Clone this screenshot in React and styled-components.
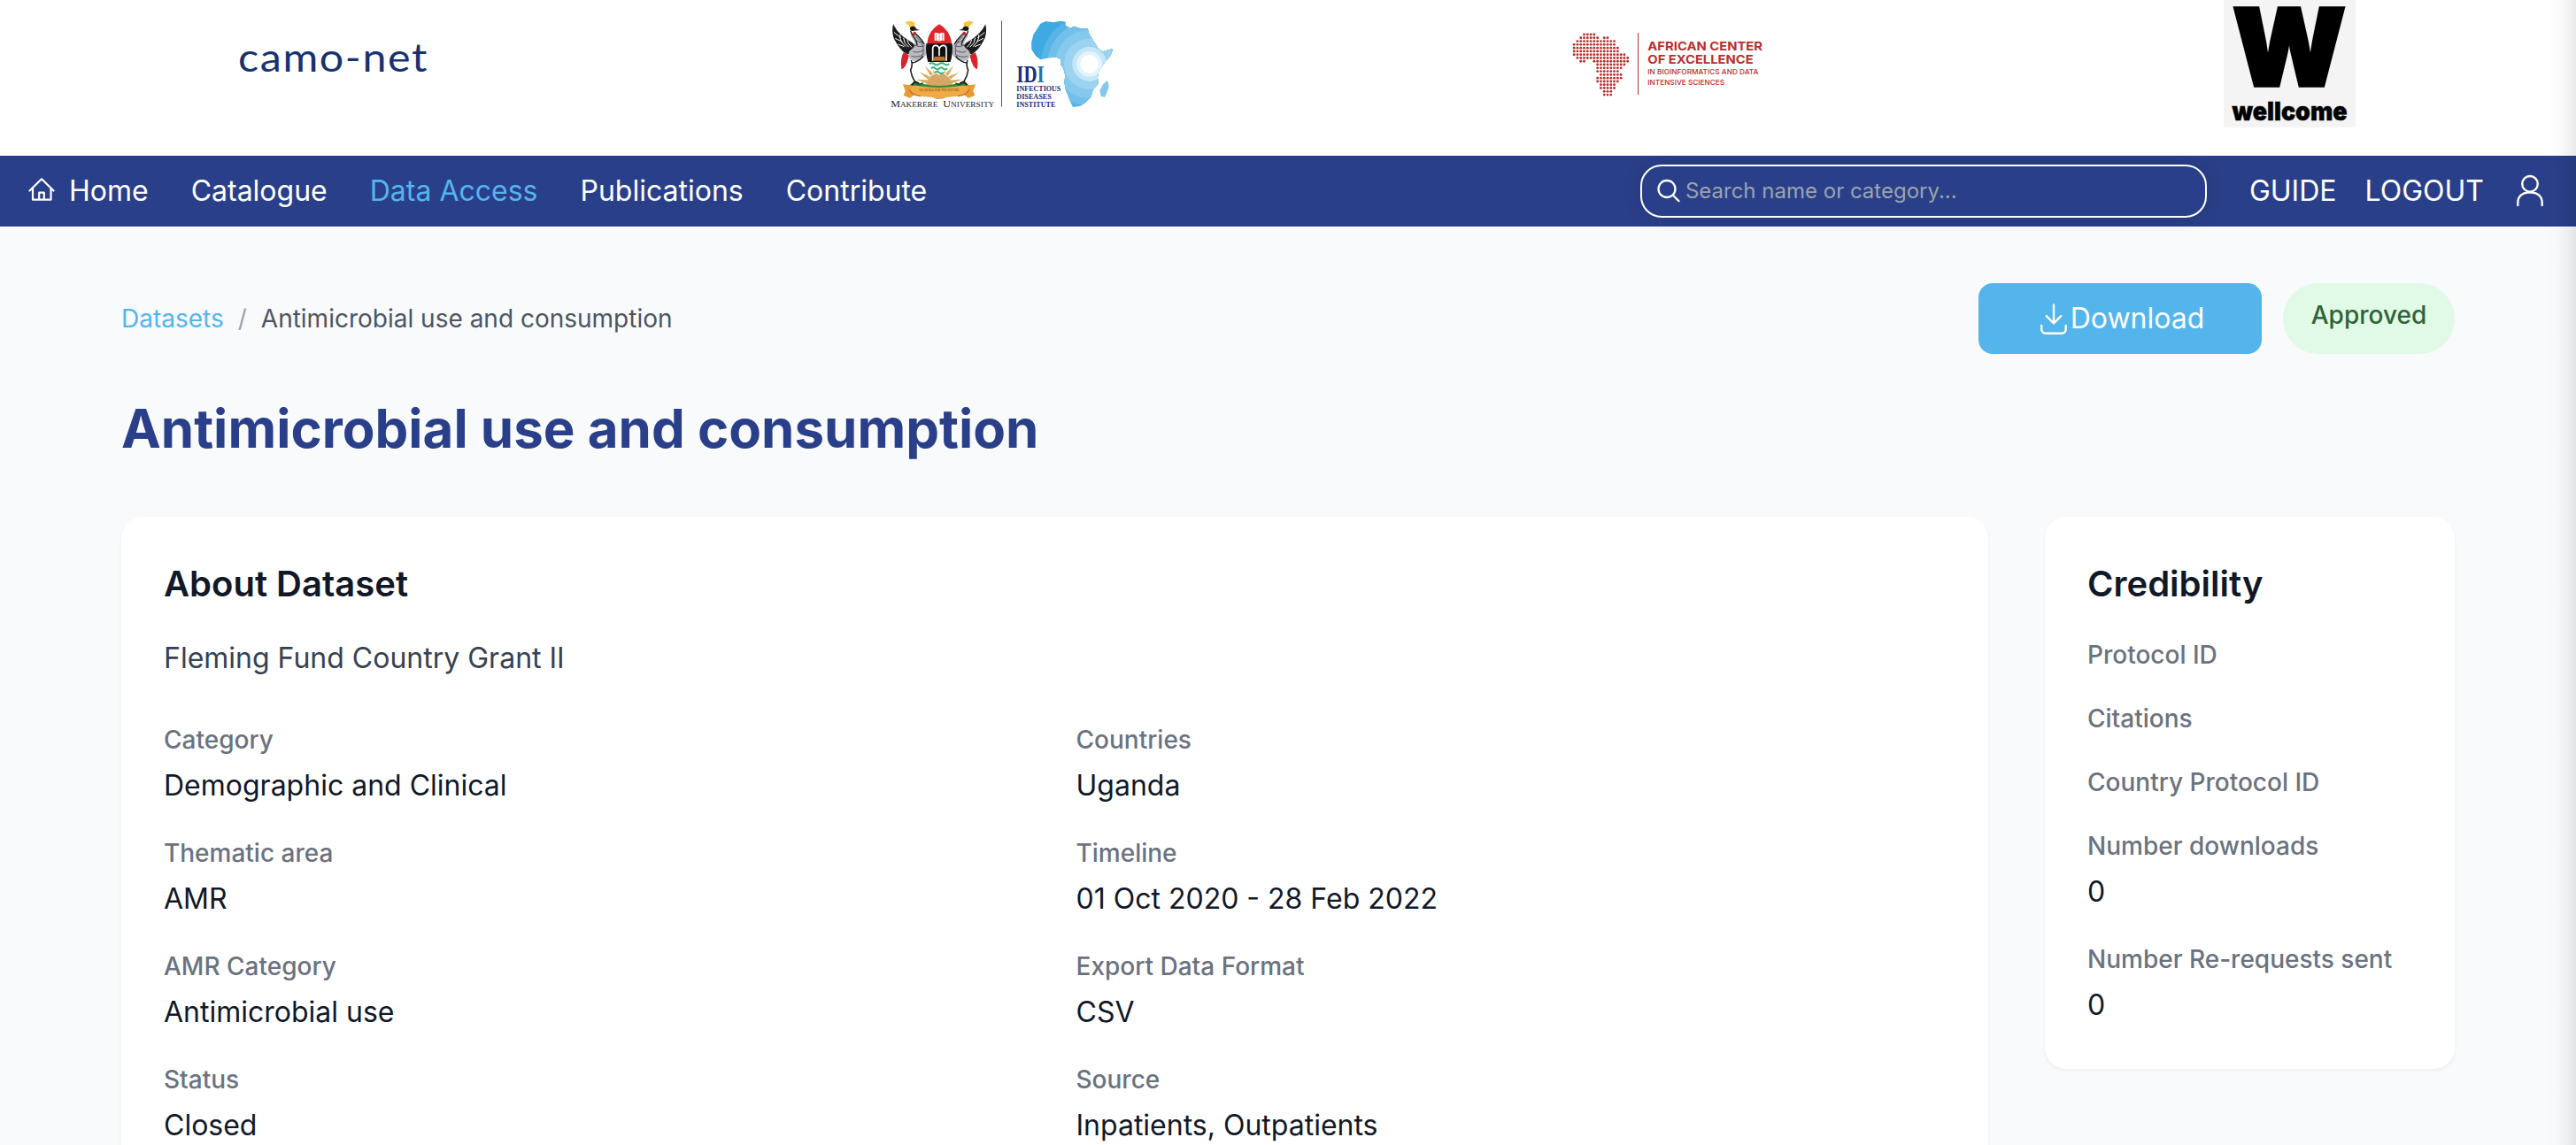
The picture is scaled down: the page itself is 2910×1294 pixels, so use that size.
import React from "react";
import styled, { createGlobalStyle } from "styled-components";

const color = {
  navy: "#2a3f89",
  sky: "#54b5ed",
  page: "#f9fafc",
  ink: "#111827",
  body: "#374151",
  label: "#6b7280",
  crumb: "#4b5563",
  red: "#b92f2b",
};

const GlobalStyle = createGlobalStyle`
  *, *::before, *::after { box-sizing: border-box; }
  html, body { margin: 0; padding: 0; overflow: hidden; }
  body {
    font-family: Inter, "Liberation Sans", sans-serif;
    background: ${color.page};
    color: ${color.ink};
  }
  h1, h2, p, dl, dt, dd { margin: 0; }
`;

const Page = styled.div`
  position: relative;
  height: 1294px;
  overflow: hidden;
`;

const EdgeShade = styled.div`
  position: absolute;
  top: 0;
  right: 0;
  bottom: 0;
  width: 32px;
  pointer-events: none;
  background: linear-gradient(
    to right,
    rgba(0, 0, 0, 0),
    rgba(0, 0, 0, 0.012) 35%,
    rgba(0, 0, 0, 0.035) 65%,
    rgba(0, 0, 0, 0.09)
  );
`;

const LogoStrip = styled.header`
  display: grid;
  grid-template-columns: 750px 770px 752px 1fr;
  height: 176px;
  padding-left: 240px;
  background: #fff;
`;

const LogoArt = styled.svg`
  display: block;
  margin-top: ${(p) => p.$top || 0}px;
`;

const NavBar = styled.nav`
  display: flex;
  align-items: center;
  height: 80px;
  padding: 0 34px 0 32px;
  background: ${color.navy};
  color: #fff;
`;

const NavLinks = styled.div`
  display: flex;
  gap: 48px;
  flex: 1;
`;

const NavLink = styled.a`
  display: flex;
  align-items: center;
  gap: 14px;
  font-size: 32px;
  line-height: 48px;
  font-weight: 400;
  color: ${(p) => (p.$active ? color.sky : "#fff")};
`;

const SearchBox = styled.label`
  display: flex;
  align-items: center;
  gap: 5px;
  width: 640px;
  height: 60px;
  padding: 0 16px;
  border: 2px solid #fff;
  border-radius: 24px;
  box-shadow: 0 0 20px rgba(0, 0, 0, 0.12);
`;

const SearchInput = styled.input`
  flex: 1;
  min-width: 0;
  padding: 0;
  border: 0;
  outline: 0;
  background: transparent;
  font: 400 24px / 32px Inter, sans-serif;
  color: #fff;
  &::placeholder {
    color: #9ca3af;
    opacity: 1;
  }
`;

const NavActions = styled.div`
  display: flex;
  align-items: center;
  gap: 32px;
  margin-left: 48px;
`;

const ProfileButton = styled.a`
  display: flex;
  margin-left: 2px;
`;

const Content = styled.main`
  padding: 64px 137px 0;
`;

const TopRow = styled.div`
  display: flex;
  justify-content: space-between;
  align-items: center;
  height: 80px;
`;

const Breadcrumb = styled.div`
  display: flex;
  gap: 16px;
  font-size: 28px;
  line-height: 40px;
  color: ${color.crumb};
`;

const CrumbLink = styled.a`
  color: ${color.sky};
`;

const CrumbSlash = styled.span`
  color: #9ca3af;
`;

const TopActions = styled.div`
  display: flex;
  gap: 24px;
  height: 80px;
`;

const DownloadButton = styled.button`
  display: flex;
  align-items: center;
  justify-content: center;
  gap: 1px;
  width: 320px;
  padding: 0 0 0 2px;
  border: 0;
  border-radius: 16px;
  background: ${color.sky};
  color: #fff;
  font: 400 32px / 48px Inter, sans-serif;
`;

const StatusPill = styled.span`
  width: 194px;
  padding: 16px 0;
  border-radius: 40px;
  background: #e1f9e7;
  color: #2f6438;
  font-size: 28px;
  line-height: 40px;
  font-weight: 500;
  text-align: center;
`;

const Title = styled.h1`
  margin: 48px 0 64px;
  font-size: 60px;
  line-height: 72px;
  font-weight: 700;
  color: ${color.navy};
`;

const Cards = styled.div`
  display: flex;
  align-items: flex-start;
  gap: 64px;
`;

const Card = styled.section`
  ${(p) => (p.$wide ? "flex: 1; min-height: 800px;" : "width: 463px;")}
  padding: 48px;
  border-radius: 24px;
  background: #fff;
  box-shadow: 0 2px 4px rgba(0, 0, 0, 0.05);
`;

const CardTitle = styled.h2`
  font-size: 40px;
  line-height: 56px;
  font-weight: 600;
`;

const Summary = styled.p`
  margin: 32px 0 48px;
  font-size: 32px;
  line-height: 48px;
  color: ${color.body};
`;

const FieldGrid = styled.dl`
  display: grid;
  grid-template-columns: ${(p) => (p.$columns === 2 ? "1fr 1fr" : "1fr")};
  gap: 32px 48px;
  margin-top: ${(p) => p.$top || 0}px;
`;

const FieldLabel = styled.dt`
  font-size: 28px;
  line-height: 40px;
  font-weight: 500;
  color: ${color.label};
  white-space: nowrap;
`;

const FieldValue = styled.dd`
  margin-top: 8px;
  font-size: 32px;
  line-height: 48px;
`;

const datasetFields = [
  ["Category", "Demographic and Clinical"],
  ["Countries", "Uganda"],
  ["Thematic area", "AMR"],
  ["Timeline", "01 Oct 2020 - 28 Feb 2022"],
  ["AMR Category", "Antimicrobial use"],
  ["Export Data Format", "CSV"],
  ["Status", "Closed"],
  ["Source", "Inpatients, Outpatients"],
];

const credibilityFields = [
  ["Protocol ID"],
  ["Citations"],
  ["Country Protocol ID"],
  ["Number downloads", "0"],
  ["Number Re-requests sent", "0"],
];

function Fields({ items, columns, top }) {
  return (
    <FieldGrid $columns={columns} $top={top}>
      {items.map(([label, value]) => (
        <div key={label}>
          <FieldLabel>{label}</FieldLabel>
          {value !== undefined && <FieldValue>{value}</FieldValue>}
        </div>
      ))}
    </FieldGrid>
  );
}

function HomeIcon() {
  return (
    <svg width="32" height="32" viewBox="0 0 32 32" fill="none" stroke="#fff" strokeWidth="2.2" strokeLinecap="round" strokeLinejoin="round">
      <path d="M1.5 15.5 15 2.3l13.5 13.2M5 12.5V25.7h20.5V12.5M12.2 25.7v-8h5.6v8" />
    </svg>
  );
}

function SearchIcon() {
  return (
    <svg width="28" height="28" viewBox="0 0 28 28" fill="none" stroke="#fff" strokeWidth="2.3" strokeLinecap="round">
      <circle cx="12" cy="11.5" r="9.500" />
      <path d="m18.800 18.500 6.700 6.700" />
    </svg>
  );
}

function UserIcon() {
  return (
    <svg width="36" height="38" viewBox="0 0 36 38" fill="none" stroke="#fff" strokeWidth="2.4" strokeLinecap="round">
      <circle cx="18" cy="10.8" r="8.8" />
      <path d="M4.3 35v-3C4.3 25 9.500 20.600 16 20.600h4C26.500 20.600 31.700 25 31.700 32v3" />
    </svg>
  );
}

function DownloadIcon() {
  return (
    <svg width="36" height="40" viewBox="0 0 36 40" fill="none" stroke="#fff" strokeWidth="2.4" strokeLinecap="round" strokeLinejoin="round">
      <path d="M18 4.500V25.500M9.800 17.200l8.200 8.300 8.200-8.300" />
      <path d="M4.300 28v4.300a4.500 4.500 0 0 0 4.500 4.500h18.400a4.500 4.500 0 0 0 4.500-4.500V28" />
    </svg>
  );
}

function CamoNetLogo() {
  return (
    <LogoArt $top={20} width="280" height="90" viewBox="0 0 280 90">
      <text x="29" y="61" textLength="215" lengthAdjust="spacingAndGlyphs" fontFamily="Lato, sans-serif" fontSize="45" letterSpacing="1.500" fill="#16336f">
        camo-net
      </text>
    </LogoArt>
  );
}

function Crane() {
  return (
    <g>
      <path d="M92 148q-12 20-7 57 16-3 26-48Z" fill="#d8232a" />
      <path d="M57 52q-8 36 10 62 14 26 34 38 22 4 36-8-4-26-22-34Q74 88 57 52Z" fill="#1c1b1d" />
      <path d="M80 88q-2 22 20 40M92 98q0 18 18 32M104 104q2 14 16 26M60 80l24 18M64 100l24 12M74 120l20 8" stroke="#fff" strokeWidth="3" fill="none" />
      <path d="M128 84c22 12 44 34 44 58-2 24-22 36-44 34-14-2-22-14-18-26 2-14 18-14 20-28 2-14-12-22-14-36Z" fill="#b9bac0" />
      <path d="M134 94c22 18 28 34 24 60M124 144q14 8 36-4M128 122q14 10 34 4M134 106q10 10 22 6M118 160q20 8 42-6" stroke="#58595f" strokeWidth="3" fill="none" />
      <path d="M116 74c2 18 22 26 22 50M128 78c10 14 24 20 34 42" stroke="#1c1b1d" strokeWidth="4" fill="none" />
      <path d="M97 46q16-11 34 2l-2 16-13 4q-5-14-19-22Z" fill="#f8c63a" />
      <ellipse cx="124" cy="67" rx="10" ry="8" fill="#18171a" />
      <path d="m132 66 15 6-15 2Z" fill="#3b3b40" />
      <circle cx="129" cy="84" r="6" fill="#d8232a" />
      <path d="M118 174q6 16-2 34 2 18 14 38M158 160q-14 20-40 24M130 246l-10 12M130 246l14 6" stroke="#1c1b1d" strokeWidth="4.500" fill="none" />
    </g>
  );
}

const sunRays = [-78, -58, -38, -19, 0, 19, 38, 58, 78];

const africaPath =
  "M556 50 574 42 600 46 625 41 641 44 641 56 657 66 669 59 690 66 716 66 722 86 738 112 752 134 766 145 802 135 794 158 772 184 754 210 750 232 752 254 734 274 728 298 708 318 690 330 666 332 655 308 642 276 637 250 640 226 634 202 624 188 625 172 610 164 582 166 556 172 540 160 526 138 525 116 532 88 Z";

function MakerereIdiLogo() {
  return (
    <LogoArt $top={10} width="280" height="130" viewBox="0 0 840 390">
      <defs>
        <clipPath id="africaClip">
          <path d={africaPath} />
        </clipPath>
      </defs>
      <g>
        {sunRays.map((a) => (
          <path key={a} d="M207 215 213 176l6 39Z" fill="#d9ac5c" transform={"rotate(" + a + " 213 256)"} />
        ))}
        <circle cx="213" cy="262" r="44" fill="#d6a766" />
        <path d="M105 264q20-18 52-10 56 14 112 0 32-8 52 10l-20 12H125Z" fill="#2f8a3e" />
        <path d="M118 258l14-9 12 8 14-6M268 252l14 6 12-9 14 9" stroke="#14562a" strokeWidth="5" fill="none" />
        <Crane />
        <g transform="translate(427 0) scale(-1 1)">
          <Crane />
        </g>
        <path d="M172 116q4-42 41-64 38 22 42 64v18h-83Z" fill="#e0262b" />
        <path d="M169 118h88q3 34-6 62h-76q-9-28-6-62Z" fill="#111" />
        <path d="M178 180h71q-8 30-36 45-27-15-35-45Z" fill="#fff" />
        <path d="M179 187q9-7 17 0t17 0 17 0 17 0M186 202q7-7 14 0t13 0 13 0 14 0M198 216q8-6 15 0t15 0" stroke="#37b07a" strokeWidth="6" fill="none" />
        <path d="M197 82q9-3 16 2 8-5 17-2v26q-9-3-17 2-8-5-16-2Z" fill="#fff" />
        <path d="M213 84v26M203 83v24M224 83v24" stroke="#c86c5c" strokeWidth="2" />
        <path d="M191 176v-40q0-12 10-12t12 12v24M237 176v-40q0-12-10-12t-14 12" stroke="#fff" strokeWidth="5" fill="none" />
        <path d="M197 162h34l4 14h-42Z" fill="#b97821" />
        <path d="M90 256l34 4 16 24-26 18-22-8 6-16ZM336 256l-34 4-16 24 26 18 22-8-6-16Z" fill="#e99a35" />
        <path d="M112 270q14-14 34-8 66 10 134 0 20-6 34 8-4 22-38 26-62 8-126 0-34-4-38-26Z" fill="#f1a943" />
        <path d="M112 272q4 20 38 24M314 272q-4 20-38 24" stroke="#c56f24" strokeWidth="4" fill="none" />
        <text x="145" y="280" textLength="136" lengthAdjust="spacingAndGlyphs" fontFamily="Liberation Serif, serif" fontSize="11" fill="#6d3d12">
          WE BUILD FOR THE FUTURE
        </text>
      </g>
      <g fontFamily="Liberation Serif, serif" fill="#26262a">
        <text x="49" y="332" fontSize="31" textLength="159" lengthAdjust="spacingAndGlyphs">
          M<tspan fontSize="24">AKERERE</tspan>
        </text>
        <text x="226" y="332" fontSize="31" textLength="174" lengthAdjust="spacingAndGlyphs">
          U<tspan fontSize="24">NIVERSITY</tspan>
        </text>
      </g>
      <path d="M424.500 40V332" stroke="#55565a" strokeWidth="3" />
      <g clipPath="url(#africaClip)">
        <rect x="500" y="30" width="320" height="320" fill="#3fa9e1" />
        <circle cx="722" cy="187" r="165" fill="#56b4e6" />
        <circle cx="722" cy="187" r="142" fill="#72c0ea" />
        <circle cx="722" cy="187" r="116" fill="#85c9ed" />
        <circle cx="722" cy="187" r="86" fill="#9cd3f0" />
        <circle cx="722" cy="187" r="58" fill="#c5e6f7" />
        <circle cx="722" cy="187" r="43" fill="#e5f4fc" />
        <circle cx="722" cy="187" r="31" fill="#fff" />
      </g>
      <path d="M782 243q10 14 2 34l-10 22-13-2-4-20 10-20Z" fill="#83c8ec" />
      <g fontFamily="Liberation Serif, serif" fontWeight="700" fill="#1d2a7c">
        <text x="475" y="250" fontSize="82" textLength="94" lengthAdjust="spacingAndGlyphs">
          ID<tspan fill="#2a6fae">I</tspan>
        </text>
        <text x="475" y="278" fontSize="21.500" textLength="150" lengthAdjust="spacingAndGlyphs">INFECTIOUS</text>
        <text x="475" y="305" fontSize="21.500" textLength="118" lengthAdjust="spacingAndGlyphs">DISEASES</text>
        <text x="475" y="332" fontSize="21.500" textLength="132" lengthAdjust="spacingAndGlyphs">INSTITUTE</text>
      </g>
    </LogoArt>
  );
}

// Runs of dots [first, last] for every row of the dotted continent.
const dotRows = [
  [[3, 6]],
  [[2, 7], [9, 10]],
  [[1, 12]],
  [[0, 12]],
  [[0, 13]],
  [[0, 13]],
  [[0, 15]],
  [[1, 16]],
  [[2, 3], [6, 16]],
  [[7, 15]],
  [[7, 14]],
  [[7, 13]],
  [[8, 14]],
  [[7, 14]],
  [[7, 13]],
  [[8, 12]],
  [[8, 12]],
  [[9, 11]],
  [[9, 11]],
];

function AceLogo() {
  const dots = [];
  dotRows.forEach((runs, row) => {
    runs.forEach(([from, to]) => {
      for (let col = from; col <= to; col += 1) {
        dots.push(<circle key={row + "-" + col} cx={54.5 + col * 11.35} cy={57 + row * 11.35} r="4.300" />);
      }
    });
  });
  return (
    <LogoArt $top={20} width="250" height="100" viewBox="0 0 750 300">
      <g fill={color.red}>{dots}</g>
      <path d="M271.500 51V261" stroke={color.red} strokeWidth="3" />
      <g fontFamily="Inter, sans-serif" fill={color.red}>
        <text x="304" y="111" fontSize="41" fontWeight="700" textLength="389" lengthAdjust="spacingAndGlyphs">AFRICAN CENTER</text>
        <text x="304" y="156" fontSize="41" fontWeight="700" textLength="358" lengthAdjust="spacingAndGlyphs">OF EXCELLENCE</text>
        <text x="304" y="192" fontSize="24" fontWeight="500" textLength="375" lengthAdjust="spacingAndGlyphs">IN BIOINFORMATICS AND DATA</text>
        <text x="304" y="229" fontSize="24" fontWeight="500" textLength="260" lengthAdjust="spacingAndGlyphs">INTENSIVE SCIENCES</text>
      </g>
    </LogoArt>
  );
}

function WellcomeLogo() {
  return (
    <LogoArt width="149" height="144" viewBox="0 0 149 144">
      <rect width="149" height="144" fill="#f4f4f4" />
      <g fontFamily="Inter, sans-serif" fontWeight="900" fill="#000" stroke="#000">
        <text x="10" y="97" fontSize="121" textLength="128" lengthAdjust="spacingAndGlyphs" strokeWidth="3.500">W</text>
        <text x="9.500" y="136" fontSize="29" textLength="130" lengthAdjust="spacingAndGlyphs" strokeWidth="0.500">wellcome</text>
      </g>
    </LogoArt>
  );
}

export default function App() {
  return (
    <Page>
      <GlobalStyle />
      <LogoStrip>
        <CamoNetLogo />
        <MakerereIdiLogo />
        <AceLogo />
        <WellcomeLogo />
      </LogoStrip>
      <NavBar>
        <NavLinks>
          <NavLink><HomeIcon />Home</NavLink>
          <NavLink>Catalogue</NavLink>
          <NavLink $active>Data Access</NavLink>
          <NavLink>Publications</NavLink>
          <NavLink>Contribute</NavLink>
        </NavLinks>
        <SearchBox>
          <SearchIcon />
          <SearchInput placeholder="Search name or category..." />
        </SearchBox>
        <NavActions>
          <NavLink>GUIDE</NavLink>
          <NavLink>LOGOUT</NavLink>
          <ProfileButton><UserIcon /></ProfileButton>
        </NavActions>
      </NavBar>
      <Content>
        <TopRow>
          <Breadcrumb>
            <CrumbLink>Datasets</CrumbLink>
            <CrumbSlash>/</CrumbSlash>
            <span>Antimicrobial use and consumption</span>
          </Breadcrumb>
          <TopActions>
            <DownloadButton><DownloadIcon />Download</DownloadButton>
            <StatusPill>Approved</StatusPill>
          </TopActions>
        </TopRow>
        <Title>Antimicrobial use and consumption</Title>
        <Cards>
          <Card $wide>
            <CardTitle>About Dataset</CardTitle>
            <Summary>Fleming Fund Country Grant II</Summary>
            <Fields items={datasetFields} columns={2} />
          </Card>
          <Card>
            <CardTitle>Credibility</CardTitle>
            <Fields items={credibilityFields} columns={1} top={32} />
          </Card>
        </Cards>
      </Content>
      <EdgeShade />
    </Page>
  );
}
